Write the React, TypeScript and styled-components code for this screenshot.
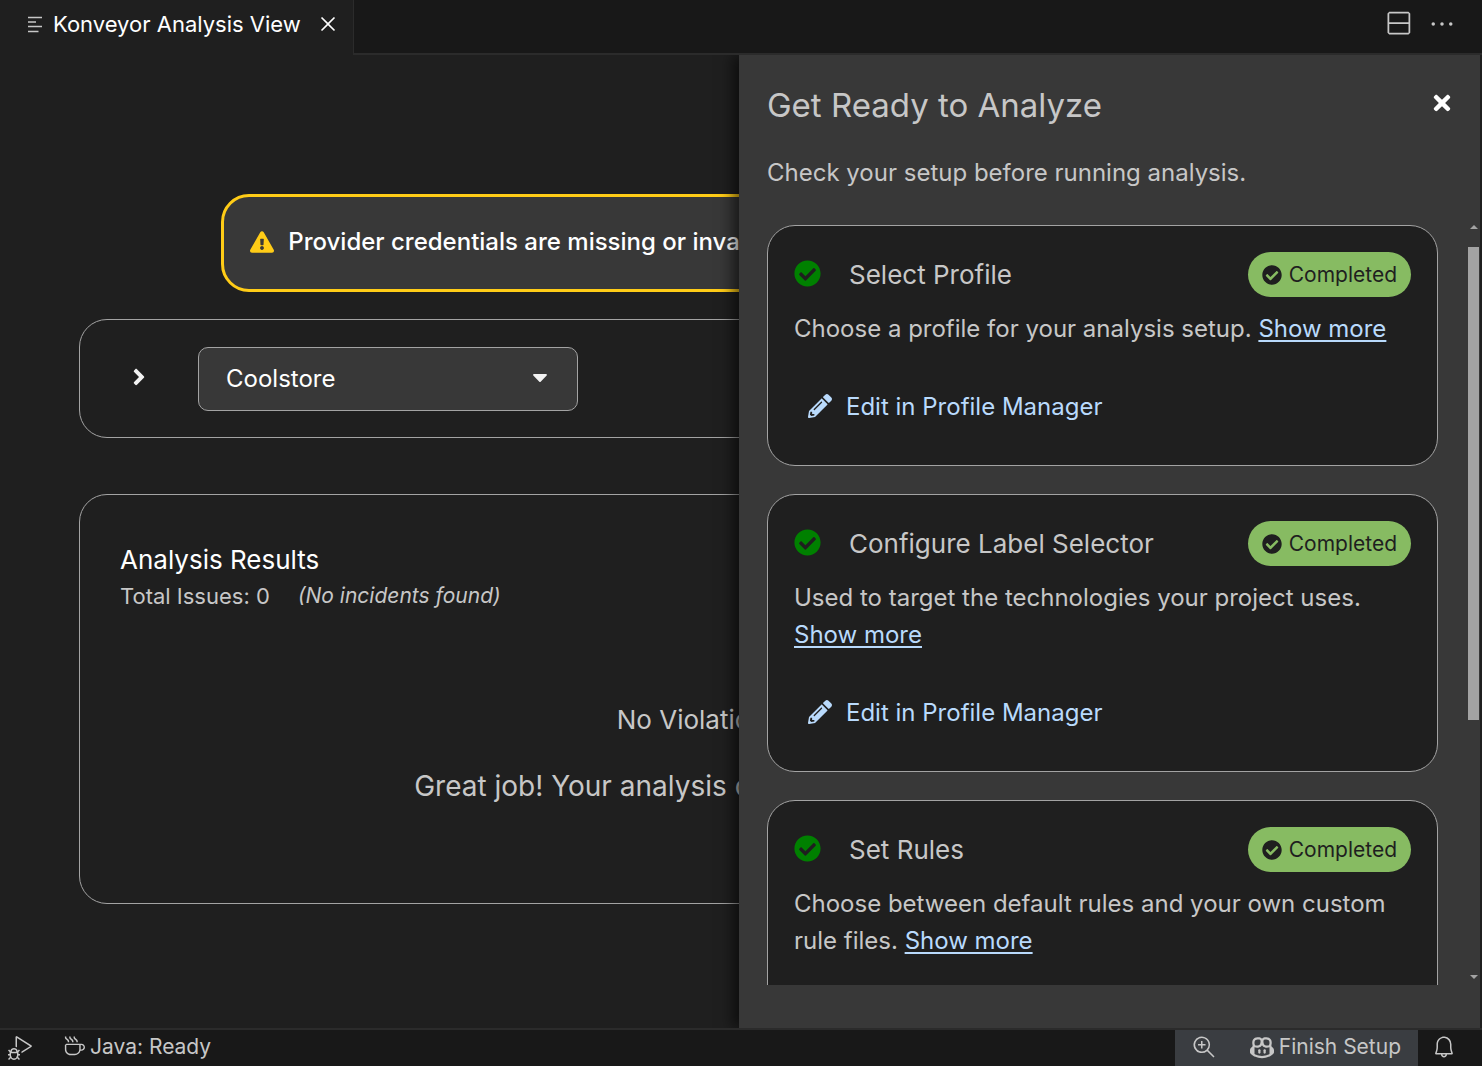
import React, { useState } from "react";
import styled, { createGlobalStyle } from "styled-components";
import {
  VscBell,
  VscClose,
  VscCoffee,
  VscCopilot,
  VscDebugAlt,
  VscEllipsis,
  VscSplitVertical,
  VscZoomIn,
} from "react-icons/vsc";
import {
  FaAngleRight,
  FaCaretDown,
  FaCheckCircle,
  FaExclamationTriangle,
  FaPencilAlt,
  FaTimes,
} from "react-icons/fa";

const color = {
  editor: "#1f1f1f",
  chrome: "#181818",
  line: "#2b2b2b",
  panel: "#383838",
  outline: "#a3a3a3",
  text: "#c7c7c7",
  strong: "#ffffff",
  link: "#b9dafc",
  warning: "#ffcc17",
  done: "#87bb62",
  ok: "#008000",
};

const GlobalStyle = createGlobalStyle`
  *, *::before, *::after { box-sizing: border-box; }
  html, body, #root { height: 100%; }
  body {
    margin: 0;
    background: ${color.editor};
    color: ${color.text};
    font-family: Inter, "Liberation Sans", sans-serif;
    font-size: 24px;
  }
  h1, h2, h3, p { margin: 0; font-weight: 400; }
  button, select { font: inherit; color: inherit; }
  button { padding: 0; border: 0; background: none; cursor: pointer; }
  svg { display: block; flex: none; }
`;

const Window = styled.div`
  display: flex;
  flex-direction: column;
  height: 100vh;
  overflow: hidden;
`;

const TabBar = styled.header`
  display: flex;
  flex: none;
  height: 55px;
`;

const Tab = styled.div`
  display: flex;
  align-items: center;
  gap: 10px;
  padding: 0 12px 8px 27px;
  border-right: 1px solid ${color.line};
  color: ${color.strong};
  font-size: 22px;
  line-height: 28px;
`;

const TabClose = styled.button`
  font-size: 26px;
  margin-left: 4px;
`;

const TabActions = styled.div`
  display: flex;
  flex: 1;
  align-items: center;
  justify-content: flex-end;
  gap: 16px;
  padding: 0 26px 6px 0;
  background: ${color.chrome};
  border-bottom: 2px solid ${color.line};
`;

const IconButton = styled.button<{ $size: number }>`
  font-size: ${(p) => p.$size}px;
`;

const Workspace = styled.div`
  position: relative;
  flex: 1;
  min-height: 0;
  margin-right: 2px;
  overflow: hidden;
`;

const Main = styled.main`
  display: flex;
  flex-direction: column;
  padding: 139px 79px 0;
`;

const Alert = styled.div`
  display: flex;
  align-items: center;
  align-self: center;
  gap: 14px;
  width: calc(70% + 112px);
  max-width: 1038px;
  height: 98px;
  padding: 0 26px 2px;
  border: 3px solid ${color.warning};
  border-radius: 28px;
  background: ${color.panel};
  color: ${color.strong};
  font-weight: 500;
  line-height: 36px;
  svg { color: ${color.warning}; }
`;

const ProfileCard = styled.section`
  display: flex;
  align-items: center;
  gap: 46px;
  height: 119px;
  margin-top: 27px;
  padding: 0 46px;
  border: 1px solid ${color.outline};
  border-radius: 28px;
`;

const Expand = styled.button`
  padding-bottom: 3px;
  color: #f2f2f2;
`;

const SelectBox = styled.div`
  display: grid;
  align-items: center;
  width: 380px;
  svg {
    grid-area: 1 / 1;
    justify-self: end;
    margin: 0 26px 3px 0;
    color: #f2f2f2;
    pointer-events: none;
  }
`;

const Select = styled.select`
  grid-area: 1 / 1;
  width: 100%;
  height: 64px;
  padding: 0 27px;
  appearance: none;
  border: 1px solid ${color.outline};
  border-radius: 10px;
  background: ${color.panel};
  color: ${color.strong};
`;

const ResultsCard = styled.section`
  height: 410px;
  margin-top: 56px;
  padding: 47px 40px;
  border: 1px solid ${color.outline};
  border-radius: 28px;
`;

const ResultsTitle = styled.h2`
  color: ${color.strong};
  font-size: 26px;
  line-height: 36px;
`;

const ResultsSummary = styled.div`
  display: flex;
  gap: 28px;
  font-size: 22px;
  line-height: 36px;
  em { font-size: 21px; }
`;

const Empty = styled.div`
  display: flex;
  flex-direction: column;
  align-items: center;
  gap: 30px;
  padding-top: 88px;
`;

const EmptyTitle = styled.h3`
  font-size: 26px;
  line-height: 36px;
`;

const EmptyText = styled.p`
  font-size: 28px;
  line-height: 36px;
`;

/* Slides over the analysis view from the right edge. */
const Drawer = styled.aside`
  position: absolute;
  inset: 0 0 0 auto;
  display: flex;
  flex-direction: column;
  width: calc(50% + 1px);
  min-width: 600px;
  padding: 28px 0 43px 28px;
  background: ${color.panel};
  box-shadow: -6px 0 14px rgba(0, 0, 0, 0.6);
`;

const DrawerHeader = styled.div`
  display: flex;
  align-items: flex-start;
  justify-content: space-between;
  padding-right: 26px;
  button { padding-top: 8px; }
`;

const DrawerTitle = styled.h1`
  font-size: 33px;
  line-height: 44px;
`;

const DrawerIntro = styled.p`
  margin-top: 28px;
  line-height: 36px;
`;

const DrawerBody = styled.div`
  display: flex;
  flex: 1;
  gap: 30px;
  min-height: 0;
  margin-top: 34px;
`;

const Steps = styled.div`
  display: flex;
  flex: 1;
  flex-direction: column;
  gap: 28px;
  overflow-y: auto;
  scrollbar-width: none;
`;

const Step = styled.section`
  flex: none;
  padding: 26px;
  border: 1px solid ${color.outline};
  border-radius: 28px;
  background: ${color.editor};
`;

const StepHeader = styled.div`
  display: flex;
  align-items: center;
  gap: 28px;
  height: 45px;
  > svg {
    margin-bottom: 3px;
    color: ${color.ok};
  }
`;

const StepTitle = styled.h2`
  flex: 1;
  font-size: 26px;
  line-height: 36px;
`;

const Badge = styled.span`
  display: flex;
  align-items: center;
  gap: 7px;
  height: 45px;
  padding: 0 14px;
  border-radius: 23px;
  background: ${color.done};
  color: ${color.editor};
  font-size: 21px;
`;

const StepText = styled.p`
  margin-top: 13px;
  line-height: 37px;
`;

const Link = styled.a`
  color: ${color.link};
  text-decoration: underline;
  text-decoration-thickness: 2px;
  text-underline-offset: 3px;
  white-space: nowrap;
`;

const EditButton = styled.button`
  display: flex;
  align-items: center;
  gap: 14px;
  height: 66px;
  margin-top: 26px;
  padding: 0 14px;
  color: ${color.link};
`;

const Scrollbar = styled.div`
  display: flex;
  flex-direction: column;
  align-items: center;
  width: 12px;
  color: ${color.outline};
`;

const ScrollArrow = styled.span<{ $down?: boolean }>`
  width: 8px;
  height: 4px;
  margin: ${(p) => (p.$down ? "0 0 6px" : "0 0 18px")};
  background: currentColor;
  clip-path: ${(p) =>
    p.$down
      ? "polygon(0 0, 100% 0, 50% 100%)"
      : "polygon(50% 0, 100% 100%, 0 100%)"};
`;

const ScrollTrack = styled.div`
  flex: 1;
  width: 100%;
`;

const ScrollThumb = styled.div`
  width: 11px;
  height: 65%;
  background: currentColor;
`;

const StatusBar = styled.footer`
  display: flex;
  flex: none;
  align-items: stretch;
  height: 38px;
  border-top: 2px solid ${color.line};
  background: ${color.chrome};
  font-size: 21px;
`;

const StatusItem = styled.button<{ $pad: string; $raised?: boolean }>`
  display: flex;
  align-items: center;
  gap: 5px;
  padding: ${(p) => p.$pad};
  background: ${(p) => (p.$raised ? "#3a3d41" : "none")};
`;

const Spacer = styled.div`
  flex: 1;
`;

const EditorIcon = () => (
  <svg width="16" height="18" viewBox="0 0 16 18" fill="none" stroke="#c7c7c7" strokeWidth="1.6" aria-hidden="true">
    <path d="M1 2.5h14M1 7h8M1 11.500h14M1 16.500h10.500" />
  </svg>
);

const steps = [
  { title: "Select Profile", text: "Choose a profile for your analysis setup." },
  { title: "Configure Label Selector", text: "Used to target the technologies your project uses." },
  { title: "Set Rules", text: "Choose between default rules and your own custom rule files." },
];

export default function App() {
  const [profile, setProfile] = useState("Coolstore");

  return (
    <>
      <GlobalStyle />
      <Window>
        <TabBar>
          <Tab>
            <EditorIcon />
            <span>Konveyor Analysis View</span>
            <TabClose aria-label="Close tab">
              <VscClose />
            </TabClose>
          </Tab>
          <TabActions>
            <IconButton $size={28} aria-label="Split editor">
              <VscSplitVertical />
            </IconButton>
            <IconButton $size={28} aria-label="More actions">
              <VscEllipsis />
            </IconButton>
          </TabActions>
        </TabBar>

        <Workspace>
          <Main>
            <Alert role="alert">
              <FaExclamationTriangle size={24} />
              Provider credentials are missing or invalid.
            </Alert>

            <ProfileCard>
              <Expand aria-label="Show details">
                <FaAngleRight size={26} />
              </Expand>
              <SelectBox>
                <Select aria-label="Profile" value={profile} onChange={(e) => setProfile(e.target.value)}>
                  <option>Coolstore</option>
                </Select>
                <FaCaretDown size={24} />
              </SelectBox>
            </ProfileCard>

            <ResultsCard>
              <ResultsTitle>Analysis Results</ResultsTitle>
              <ResultsSummary>
                <span>Total Issues: 0</span>
                <em>(No incidents found)</em>
              </ResultsSummary>
              <Empty>
                <EmptyTitle>No Violations Found</EmptyTitle>
                <EmptyText>Great job! Your analysis didn't find any violations.</EmptyText>
              </Empty>
            </ResultsCard>
          </Main>

          <Drawer aria-label="Get Ready to Analyze">
            <DrawerHeader>
              <DrawerTitle>Get Ready to Analyze</DrawerTitle>
              <IconButton $size={24} aria-label="Close">
                <FaTimes color="#ffffff" />
              </IconButton>
            </DrawerHeader>
            <DrawerIntro>Check your setup before running analysis.</DrawerIntro>
            <DrawerBody>
              <Steps>
                {steps.map((step) => (
                  <Step key={step.title}>
                    <StepHeader>
                      <FaCheckCircle size={27} />
                      <StepTitle>{step.title}</StepTitle>
                      <Badge>
                        <FaCheckCircle size={20} />
                        Completed
                      </Badge>
                    </StepHeader>
                    <StepText>
                      {step.text} <Link href="#">Show more</Link>
                    </StepText>
                    <EditButton>
                      <FaPencilAlt size={24} />
                      Edit in Profile Manager
                    </EditButton>
                  </Step>
                ))}
              </Steps>
              <Scrollbar aria-hidden="true">
                <ScrollArrow />
                <ScrollTrack>
                  <ScrollThumb />
                </ScrollTrack>
                <ScrollArrow $down />
              </Scrollbar>
            </DrawerBody>
          </Drawer>
        </Workspace>

        <StatusBar>
          <StatusItem $pad="0 22px 0 8px" aria-label="Debug">
            <VscDebugAlt size={24} />
          </StatusItem>
          <StatusItem $pad="0 8px 3px">
            <VscCoffee size={23} />
            Java: Ready
          </StatusItem>
          <Spacer />
          <StatusItem $raised $pad="0 17px 3px" aria-label="Zoom in">
            <VscZoomIn size={24} />
          </StatusItem>
          <StatusItem $raised $pad="0 17px 3px">
            <VscCopilot size={24} />
            Finish Setup
          </StatusItem>
          <StatusItem $pad="0 26px 3px 14px" aria-label="Notifications">
            <VscBell size={24} />
          </StatusItem>
        </StatusBar>
      </Window>
    </>
  );
}
